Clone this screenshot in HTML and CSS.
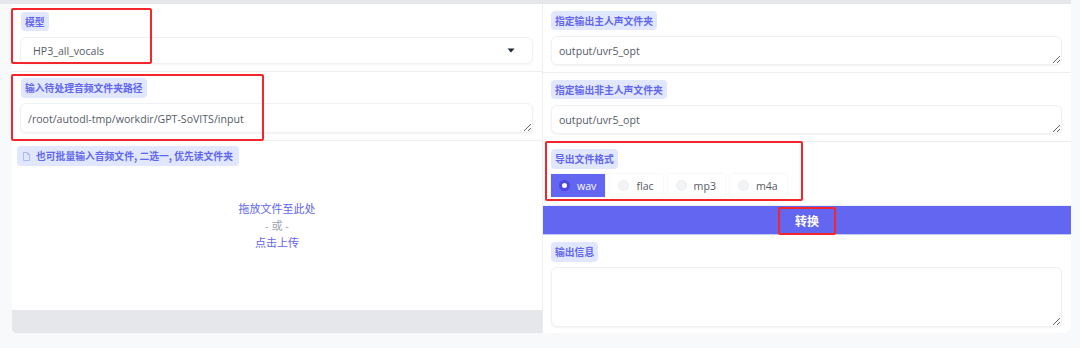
FILE: index.html
```html
<!DOCTYPE html>
<html lang="zh">
<head>
    <meta charset="UTF-8">
    <meta name="viewport" content="width=device-width, initial-scale=1.0">
    <title>UVR5</title>
    <link rel="stylesheet" href="styles.css">
</head>
<body>

<div class="page">
    <div class="topbar"></div>

    <div class="panels">
        <!-- left column -->
        <div class="col col-left">
            <div class="block b-model">
                <span class="label">模型</span>
                <div class="dropdown">
                    <span>HP3_all_vocals</span>
                    <svg class="caret" width="8" height="5" viewBox="0 0 8 5"><path d="M0.5 0.5h7L4 4.5z" fill="#1f2937"/></svg>
                </div>
            </div>
            <div class="block b-path">
                <span class="label">输入待处理音频文件夹路径</span>
                <textarea class="field tall" rows="1">/root/autodl-tmp/workdir/GPT-SoVITS/input</textarea>
            </div>
            <div class="block b-upload">
                <span class="label label-file">
                    <svg width="7" height="9" viewBox="0 0 7 9"><path d="M0.5 0.5h4l2 2v6h-6z M4.5 0.5v2h2" fill="none" stroke="#a5b4fc" stroke-width="0.9"/></svg>
                    也可批量输入音频文件, 二选一, 优先读文件夹
                </span>
                <div class="drop">
                    <div class="drop-text">拖放文件至此处</div>
                    <div class="drop-or">- 或 -</div>
                    <div class="drop-text">点击上传</div>
                </div>
                <div class="drop-foot"></div>
            </div>
        </div>

        <!-- right column -->
        <div class="col col-right">
            <div class="block r-vocal">
                <span class="label">指定输出主人声文件夹</span>
                <textarea class="field" rows="1">output/uvr5_opt</textarea>
            </div>
            <div class="block r-inst">
                <span class="label">指定输出非主人声文件夹</span>
                <textarea class="field" rows="1">output/uvr5_opt</textarea>
            </div>
            <div class="block r-format">
                <span class="label">导出文件格式</span>
                <div class="radios">
                    <label class="radio selected"><span class="dot"></span>wav</label>
                    <label class="radio"><span class="dot"></span>flac</label>
                    <label class="radio"><span class="dot"></span>mp3</label>
                    <label class="radio"><span class="dot"></span>m4a</label>
                </div>
            </div>
            <button class="convert">转换</button>
            <div class="block r-output">
                <span class="label">输出信息</span>
                <textarea class="field out" rows="3"></textarea>
            </div>
        </div>
    </div>

    <!-- annotation boxes -->
    <div class="mark m1"></div>
    <div class="mark m2"></div>
    <div class="mark m3"></div>
    <div class="mark m4"></div>
</div>

</body>
</html>
```

FILE: styles.css
```css
* {
    box-sizing: border-box;
}
body {
    margin: 0;
    background-color: #f8f9fb;
    font-family: 'Open Sans', 'Noto Sans CJK SC', sans-serif;
    color: #4b5563;
}
.page {
    position: relative;
    width: 1080px;
    height: 348px;
}
.topbar {
    width: 1071px;
    height: 4px;
    background-color: #e5e7eb;
}
.panels {
    display: flex;
    margin-left: 12px;
    width: 1059px;
}
.col {
    display: flex;
    flex-direction: column;
    background-color: #ffffff;
}
.col-left {
    width: 531px;
    border-right: 1px solid #eceef1;
}
.col-right {
    width: 528px;
    border-bottom-right-radius: 8px;
}
.block {
    display: flex;
    flex-direction: column;
    align-items: flex-start;
    border-bottom: 1px solid #eceef1;
}
.label {
    display: inline-flex;
    align-items: center;
    gap: 6px;
    height: 19px;
    padding: 0 4px;
    border-radius: 4px;
    background-color: #e0e7ff;
    color: #6366f1;
    font-size: 9.8px;
    font-weight: 700;
    font-family: 'Noto Sans CJK SC', sans-serif;
}
.field {
    width: 513px;
    height: 29px;
    padding: 6px 10px;
    border: 1px solid #eef0f3;
    border-radius: 6px;
    box-shadow: 0 1px 2px rgba(0, 0, 0, 0.05);
    font-family: 'Open Sans', sans-serif;
    font-size: 10.6px;
    color: #555b66;
    line-height: 16px;
    resize: vertical;
    outline: none;
    overflow: hidden;
}
/* left column blocks */
.b-model {
    height: 68px;
    padding: 8px 0 0 8px;
}
.b-model .label {
    margin-left: 1px;
}
.dropdown {
    display: flex;
    align-items: center;
    justify-content: space-between;
    width: 513px;
    height: 27px;
    margin-top: 6px;
    padding: 0 17px 0 12px;
    border: 1px solid #eef0f3;
    border-radius: 6px;
    box-shadow: 0 1px 2px rgba(0, 0, 0, 0.05);
    font-size: 10.6px;
    color: #555b66;
}
.b-path {
    height: 69px;
    padding: 6px 0 0 8px;
}
.b-path .label {
    margin-left: 1px;
    height: 20px;
}
.b-path .field {
    margin-top: 5px;
    height: 30px;
    padding: 7px 7px;
}
.b-upload {
    flex: 1;
    height: 192px;
    border-bottom: none;
}
.label-file {
    margin: 5px 0 0 5px;
    height: 20px;
    padding: 0 6px;
}
.drop {
    align-self: stretch;
    flex: 1;
    display: flex;
    flex-direction: column;
    align-items: center;
    padding-top: 34px;
    font-size: 11px;
    line-height: 17px;
}
.drop-text {
    color: #6366f1;
}
.drop-or {
    color: #9ca3af;
}
.drop-foot {
    align-self: stretch;
    height: 23px;
    background-color: #e5e7eb;
    border-bottom-left-radius: 4px;
}
/* right column blocks */
.r-vocal {
    height: 69px;
    padding: 7px 0 0 8px;
}
.r-vocal .field {
    margin-top: 6px;
    width: 511px;
    padding: 6px 7px;
}
.r-inst {
    height: 69px;
    padding: 7px 0 0 8px;
}
.r-inst .field {
    margin-top: 6px;
    width: 511px;
    padding: 6px 7px;
}
.r-format {
    height: 64px;
    padding: 7px 0 0 8px;
}
.r-format .label {
    height: 20px;
}
.radios {
    display: flex;
    gap: 5px;
    margin-top: 5px;
}
.radio {
    display: flex;
    align-items: center;
    gap: 7px;
    height: 23px;
    padding: 0 9px 0 8px;
    background-color: #ffffff;
    box-shadow: 0 0 2px rgba(0, 0, 0, 0.08);
    font-size: 10.6px;
    color: #555b66;
}
.radio .dot {
    width: 11px;
    height: 11px;
    border-radius: 50%;
    background-color: #f3f4f6;
    border: 1px solid #eceef1;
}
.radio.selected {
    background-color: #6366f1;
    color: #ffffff;
}
.radio.selected .dot {
    background-color: #ffffff;
    border: 3.5px solid #4f46e5;
}
.convert {
    height: 29px;
    border: none;
    border-bottom: 1px solid #c7c9f5;
    background-color: #6366f1;
    color: #ffffff;
    font-family: 'Noto Sans CJK SC', sans-serif;
    font-size: 12px;
    font-weight: 700;
    cursor: pointer;
}
.r-output {
    height: 98px;
    padding: 7px 0 0 8px;
    border-bottom: none;
}
.r-output .label {
    height: 20px;
}
.r-output .field.out {
    margin-top: 5px;
    width: 511px;
    height: 60px;
}
/* red annotation boxes */
.mark {
    position: absolute;
    border: 2px solid #f5262b;
    border-radius: 2px;
}
.m1 { left: 11px; top: 8px; width: 141px; height: 56px; }
.m2 { left: 11px; top: 74px; width: 253px; height: 67px; }
.m3 { left: 545px; top: 141px; width: 258px; height: 60px; }
.m4 { left: 778px; top: 207px; width: 58px; height: 28px; }
```
